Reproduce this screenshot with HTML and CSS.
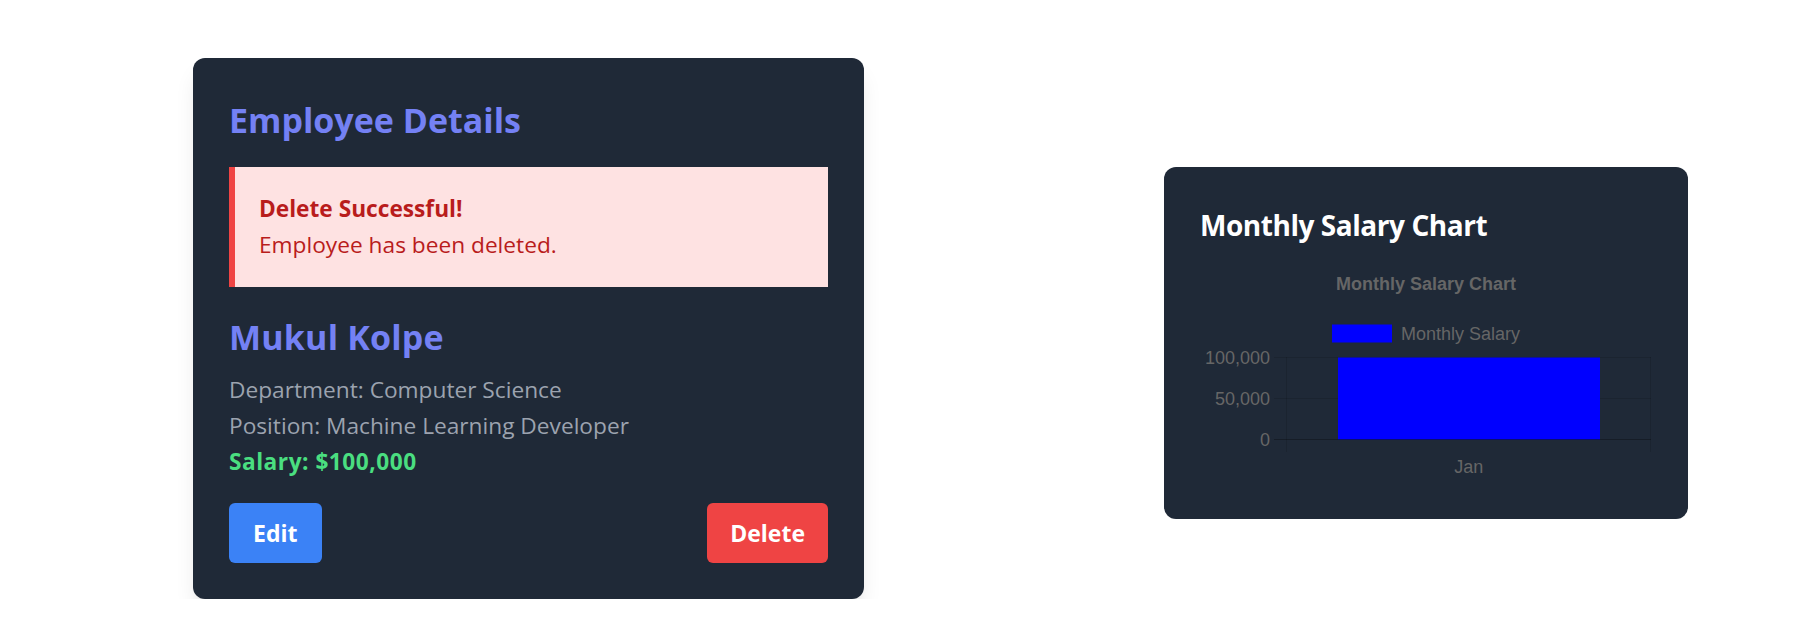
FILE: index.html
```html
<!DOCTYPE html>
<html lang="en">
<head>
<meta charset="utf-8">
<title>Employee Details</title>
<link rel="stylesheet" href="styles.css">
</head>
<body>
<main class="page">
  <section class="card details">
    <h1 class="title">Employee Details</h1>
    <div class="alert">
      <p class="alert-title">Delete Successful!</p>
      <p class="alert-text">Employee has been deleted.</p>
    </div>
    <h2 class="name">Mukul Kolpe</h2>
    <p class="info">Department: Computer Science</p>
    <p class="info">Position: Machine Learning Developer</p>
    <p class="salary">Salary: $100,000</p>
    <div class="actions">
      <button class="btn btn-edit">Edit</button>
      <button class="btn btn-delete">Delete</button>
    </div>
  </section>
  <section class="card chart-card">
    <h2 class="chart-heading">Monthly Salary Chart</h2>
    <svg class="chart" width="452" height="214" viewBox="0 0 452 214">
      <text x="226" y="21" text-anchor="middle" class="c-title">Monthly Salary Chart</text>
      <rect x="132" y="55.5" width="60" height="18" fill="#0000ff"/>
      <text x="201" y="70.5" class="c-label">Monthly Salary</text>
      <line x1="74" y1="88.5" x2="451" y2="88.5" class="grid"/>
      <line x1="74" y1="129.5" x2="451" y2="129.5" class="grid"/>
      <line x1="86.5" y1="88" x2="86.5" y2="183" class="grid"/>
      <line x1="450.5" y1="88" x2="450.5" y2="183" class="grid"/>
      <rect x="138" y="88.5" width="262" height="82" fill="#0000ff"/>
      <line x1="74" y1="170.5" x2="451" y2="170.5" class="zero"/>
      <text x="70" y="94.5" text-anchor="end" class="c-label">100,000</text>
      <text x="70" y="135.5" text-anchor="end" class="c-label">50,000</text>
      <text x="70" y="176.5" text-anchor="end" class="c-label">0</text>
      <text x="268.7" y="203.7" text-anchor="middle" class="c-label">Jan</text>
    </svg>
  </section>
</main>
</body>
</html>
```

FILE: styles.css
```css
* { box-sizing: border-box; }

body {
  margin: 0;
  background: #ffffff;
  font-family: "Open Sans", "Noto Sans", sans-serif;
}

.page {
  display: flex;
  align-items: flex-start;
  gap: 300px;
  padding: 58px 0 0 193px;
}

.card {
  background: #1f2937;
  border-radius: 12px;
  padding: 36px;
}

.details {
  width: 671px;
  box-shadow: 0 15px 22px -4px rgba(0, 0, 0, 0.1), 0 6px 9px -6px rgba(0, 0, 0, 0.1);
}

.title,
.name {
  margin: 0;
  padding-top: 2px;
  font-size: 34px;
  line-height: 48px;
  font-weight: 700;
  color: #7481f4;
}

.title {
  margin-bottom: 23px;
}

.alert {
  background: #fee2e2;
  border-left: 6px solid #ef4444;
  padding: 24px;
  color: #b91c1c;
  margin-bottom: 24px;
}

.alert p {
  margin: 0;
  font-size: 22.7px;
  line-height: 36px;
}

.alert-title {
  font-weight: 700;
}

.name {
  margin-bottom: 11px;
  letter-spacing: 0.2px;
}

.info,
.salary {
  margin: 0;
  font-size: 22.7px;
  line-height: 36px;
  color: #9ca3af;
}

.salary {
  font-weight: 700;
  color: #4ade80;
  letter-spacing: 0.5px;
}

.actions {
  display: flex;
  justify-content: space-between;
  margin-top: 23px;
}

.btn {
  border: 0;
  border-radius: 6px;
  padding: 12px 24px;
  font-family: inherit;
  font-size: 23px;
  line-height: 36px;
  font-weight: 700;
  color: #ffffff;
}

.btn-edit {
  background: #3b82f6;
  padding-right: 25px;
}

.btn-delete {
  background: #ef4444;
  padding-left: 23px;
  padding-right: 23px;
}

.chart-card {
  width: 524px;
  margin-top: 109px;
}

.chart-heading {
  margin: 0 0 22px;
  font-size: 28px;
  line-height: 44px;
  font-weight: 700;
  letter-spacing: -0.45px;
  color: #ffffff;
}

.chart {
  display: block;
}

.c-title {
  font-family: "Liberation Sans", Arial, sans-serif;
  font-size: 18px;
  font-weight: 700;
  fill: #666666;
}

.c-label {
  font-family: "Liberation Sans", Arial, sans-serif;
  font-size: 18px;
  fill: #666666;
}

.grid {
  stroke: rgba(0, 0, 0, 0.12);
  stroke-width: 1;
}

.zero {
  stroke: rgba(0, 0, 0, 0.28);
  stroke-width: 1;
}
```
